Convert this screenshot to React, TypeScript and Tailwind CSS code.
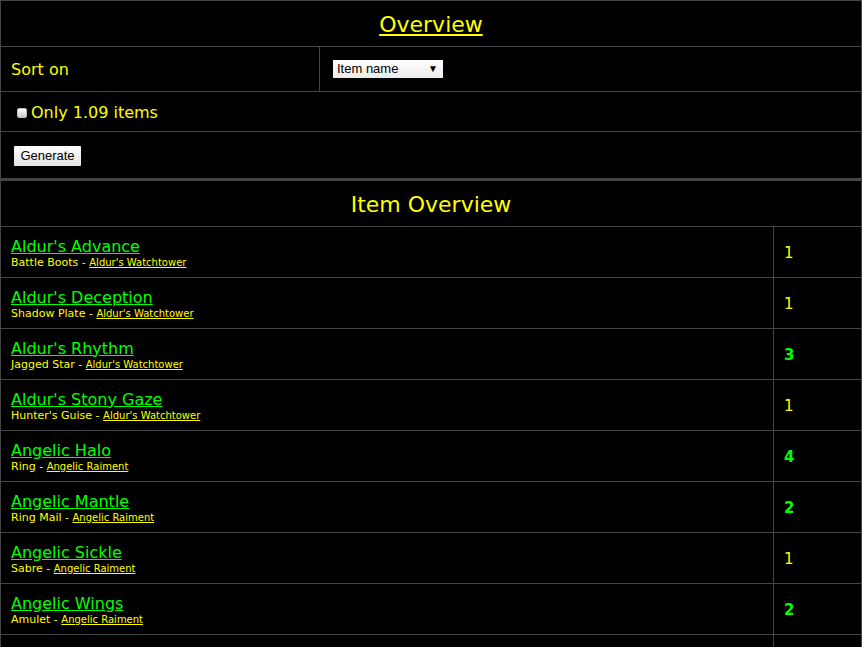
import React from 'react';

type Item = {
  name: string;
  base: string;
  set: string;
  count: number;
};

const items: Item[] = [
  { name: "Aldur's Advance", base: 'Battle Boots', set: "Aldur's Watchtower", count: 1 },
  { name: "Aldur's Deception", base: 'Shadow Plate', set: "Aldur's Watchtower", count: 1 },
  { name: "Aldur's Rhythm", base: 'Jagged Star', set: "Aldur's Watchtower", count: 3 },
  { name: "Aldur's Stony Gaze", base: "Hunter's Guise", set: "Aldur's Watchtower", count: 1 },
  { name: 'Angelic Halo', base: 'Ring', set: 'Angelic Raiment', count: 4 },
  { name: 'Angelic Mantle', base: 'Ring Mail', set: 'Angelic Raiment', count: 2 },
  { name: 'Angelic Sickle', base: 'Sabre', set: 'Angelic Raiment', count: 1 },
  { name: 'Angelic Wings', base: 'Amulet', set: 'Angelic Raiment', count: 2 },
  { name: "Arcanna's Deathwand", base: 'War Staff', set: "Arcanna's Tricks", count: 1 },
  { name: "Arcanna's Flesh", base: 'Light Plate', set: "Arcanna's Tricks", count: 1 },
];

function ItemRow({ item }: { item: Item }) {
  return (
    <div className="flex h-[51px] border-b border-[#444]">
      <div className="flex flex-1 flex-col justify-center pl-[10px] pt-[2px]">
        <a href="#" className="text-[16px] leading-[18px] text-[#0f0] underline">
          {item.name}
        </a>
        <div className="text-[11px] leading-[13px] text-[#ff0]">
          {item.base} -{' '}
          <a href="#" className="text-[10px] underline">
            {item.set}
          </a>
        </div>
      </div>
      <div
        className={
          item.count > 1
            ? 'flex w-[88px] items-center border-l border-[#444] pl-[10px] pt-[2px] text-[15px] font-bold text-[#0f0]'
            : 'flex w-[88px] items-center border-l border-[#444] pl-[10px] pt-[2px] text-[15px] text-[#ff0]'
        }
      >
        {item.count}
      </div>
    </div>
  );
}

export default function App() {
  return (
    <div className="min-h-screen bg-black font-['DejaVu_Sans',Verdana,sans-serif] text-[#ff0]">
      {/* settings */}
      <div className="border border-[#444]">
        <div className="flex h-[45px] items-center justify-center pt-[2px]">
          <a href="#" className="text-[22px] text-[#ff0] underline">
            Overview
          </a>
        </div>
        <div className="flex h-[45px] border-t border-[#444]">
          <div className="flex w-[319px] items-center border-r border-[#444] pl-[10px] pt-[2px] text-[16px]">
            Sort on
          </div>
          <div className="flex flex-1 items-center pl-[13px]">
            <button
              type="button"
              aria-label="Sort on"
              className="flex h-[18px] w-[110px] items-center justify-between bg-gradient-to-b from-white to-[#ececec] pl-[4px] pr-[5px] font-['Liberation_Sans',Arial,sans-serif] text-[13px] leading-[18px] text-black"
            >
              <span>Item name</span>
              <span className="text-[10px] leading-[12px]">▼</span>
            </button>
          </div>
        </div>
        <div className="flex h-[40px] items-center border-t border-[#444] pl-[16px] pt-[2px] text-[16px]">
          <span className="mr-[4px] inline-block h-[10px] w-[10px] rounded-[2px] border border-[#bbb] bg-gradient-to-b from-white to-[#ccc]" />
          Only 1.09 items
        </div>
        <div className="flex h-[47px] items-center border-t border-[#444] pl-[13px] pt-[1px]">
          <button className="h-[20px] w-[67px] rounded-[1px] bg-gradient-to-b from-white to-[#e2e2e2] font-['Liberation_Sans',Arial,sans-serif] text-[13px] leading-[20px] text-black">
            Generate
          </button>
        </div>
      </div>

      {/* items */}
      <div className="border-x border-t-2 border-[#444]">
        <div className="flex h-[46px] items-center justify-center border-b border-[#444] pt-[2px] text-[22px]">
          Item Overview
        </div>
        {items.map((item) => (
          <ItemRow key={item.name} item={item} />
        ))}
      </div>
    </div>
  );
}
